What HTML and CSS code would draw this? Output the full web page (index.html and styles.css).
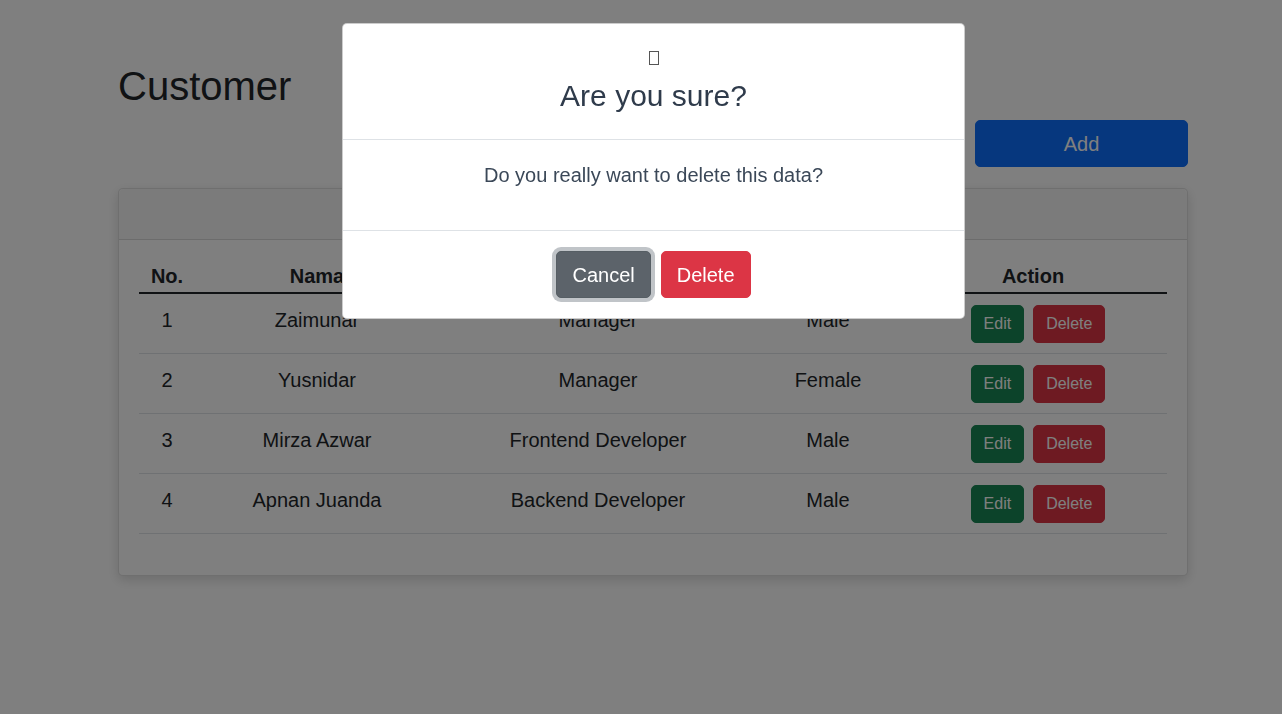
FILE: index.html
```html
<!DOCTYPE html>
<html lang="en">
<head>
<meta charset="utf-8">
<title>Customer</title>
<link rel="stylesheet" href="styles.css">
</head>
<body>
<div class="page">
  <h1 class="title">Customer</h1>
  <div class="toolbar">
    <button class="btn btn-lg btn-primary add-btn">Add</button>
  </div>
  <div class="card">
    <div class="card-header"></div>
    <div class="card-body">
      <table class="table">
        <colgroup>
          <col class="c-no"><col class="c-name"><col class="c-job"><col class="c-gender"><col class="c-action">
        </colgroup>
        <thead>
          <tr><th>No.</th><th>Nama</th><th>Job</th><th>Sex</th><th>Action</th></tr>
        </thead>
        <tbody>
          <tr><td>1</td><td>Zaimunar</td><td>Manager</td><td>Male</td><td><div class="actions"><button class="btn btn-success">Edit</button><button class="btn btn-danger">Delete</button></div></td></tr>
          <tr><td>2</td><td>Yusnidar</td><td>Manager</td><td>Female</td><td><div class="actions"><button class="btn btn-success">Edit</button><button class="btn btn-danger">Delete</button></div></td></tr>
          <tr><td>3</td><td>Mirza Azwar</td><td>Frontend Developer</td><td>Male</td><td><div class="actions"><button class="btn btn-success">Edit</button><button class="btn btn-danger">Delete</button></div></td></tr>
          <tr><td>4</td><td>Apnan Juanda</td><td>Backend Developer</td><td>Male</td><td><div class="actions"><button class="btn btn-success">Edit</button><button class="btn btn-danger">Delete</button></div></td></tr>
        </tbody>
      </table>
    </div>
  </div>
</div>

<div class="backdrop"></div>

<div class="modal">
  <div class="modal-header">
    <svg class="tofu" width="10" height="14" viewBox="0 0 10 14"><rect x="0.5" y="0.5" width="9" height="13" fill="none" stroke="#555" stroke-width="1"/></svg>
    <h2 class="modal-title">Are you sure?</h2>
  </div>
  <div class="modal-body">Do you really want to delete this data?</div>
  <div class="modal-footer">
    <button class="btn btn-lg btn-secondary focused">Cancel</button>
    <button class="btn btn-lg btn-danger">Delete</button>
  </div>
</div>
</body>
</html>
```
FILE: styles.css
```css
* { box-sizing: border-box; }
html, body { margin: 0; padding: 0; }
body {
  font-family: "Liberation Sans", Arial, sans-serif;
  color: #212529;
  background: #fff;
  width: 1282px;
  height: 714px;
  overflow: hidden;
}
.page {
  padding: 62px 94px 0 118px;
}
.title {
  margin: 0;
  font-size: 40px;
  font-weight: 400;
  line-height: 48px;
}
.toolbar {
  display: flex;
  justify-content: flex-end;
  margin-top: 10px;
}
.btn {
  font-family: "Liberation Sans", Arial, sans-serif;
  display: inline-flex;
  align-items: center;
  justify-content: center;
  border: 1px solid transparent;
  border-radius: 5px;
  font-size: 16px;
  line-height: 24px;
  padding: 6px 12px;
  color: #fff;
  cursor: pointer;
}
.btn-lg {
  font-size: 20px;
  line-height: 30px;
  padding: 8px 15px;
}
.btn-primary { background: #0d6efd; border-color: #0d6efd; }
.btn-success { background: #198754; border-color: #198754; }
.btn-danger { background: #dc3545; border-color: #dc3545; }
.btn-secondary { background: #5c636a; border-color: #565e64; }
.add-btn { width: 213px; height: 47px; padding: 0; }
.card {
  margin-top: 21px;
  border: 1px solid rgba(0,0,0,.125);
  border-radius: 5px;
  box-shadow: 0 4px 12px rgba(0,0,0,.15);
  background: #fff;
}
.card-header {
  height: 51px;
  background: rgba(0,0,0,.03);
  border-bottom: 1px solid rgba(0,0,0,.125);
  border-radius: 5px 5px 0 0;
}
.card-body {
  padding: 21px 20px 20px;
}
.table {
  width: 1028px;
  border-collapse: collapse;
  font-size: 20px;
  line-height: 30px;
  margin-bottom: 21px;
  table-layout: fixed;
}
.c-no { width: 56px; }
.c-name { width: 244px; }
.c-job { width: 318px; }
.c-gender { width: 142px; }
.c-action { width: 268px; }
.table th {
  font-weight: 700;
  text-align: center;
  padding: 0 8px 1px;
  border-bottom: 2px solid #212529;
}
.table td {
  text-align: center;
  vertical-align: top;
  padding: 11px 8px 10px;
  border-bottom: 1px solid #dee2e6;
}
.actions {
  display: flex;
  justify-content: center;
  gap: 9px;
  padding-left: 10px;
}
.actions .btn { height: 38px; }
.backdrop {
  position: fixed;
  inset: 0;
  background: rgba(0,0,0,.5);
}
.modal {
  position: fixed;
  left: 342px;
  top: 23px;
  width: 623px;
  background: #fff;
  border: 1px solid rgba(0,0,0,.2);
  border-radius: 5px;
  text-align: center;
}
.modal-header {
  height: 116px;
  padding-top: 27px;
  border-bottom: 1px solid #dee2e6;
}
.tofu { display: block; margin: 0 auto; }
.modal-title {
  margin: 13px 0 0;
  font-size: 30px;
  font-weight: 400;
  line-height: 36px;
  color: #2f3b4b;
}
.modal-body {
  padding: 20px 16px 40px;
  font-size: 20px;
  line-height: 30px;
  color: #3b4858;
}
.modal-footer {
  border-top: 1px solid #dee2e6;
  padding: 20px 16px 20px;
  display: flex;
  justify-content: center;
  gap: 10px;
}
.modal-footer .btn { height: 47px; }
.focused { box-shadow: 0 0 0 4px rgba(130,138,145,.5); }
```
